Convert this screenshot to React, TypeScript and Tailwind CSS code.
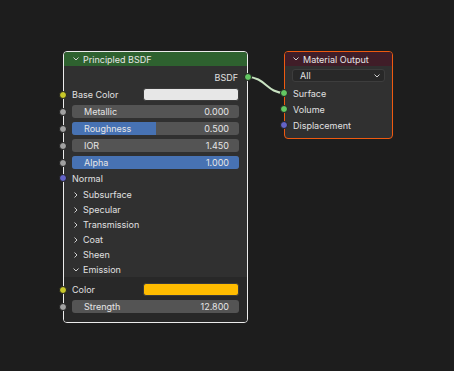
import React from "react";

const font = { fontFamily: "Inter, 'Noto Sans', sans-serif" };

function Socket({ color }: { color: string }) {
  return (
    <span
      className="absolute left-[-5px] top-1/2 z-10 h-[8px] w-[8px] -translate-y-1/2 rounded-full border border-[#202020]"
      style={{ backgroundColor: color }}
    />
  );
}

function Chevron({ open }: { open?: boolean }) {
  return (
    <svg width="8" height="8" viewBox="0 0 8 8" className="shrink-0">
      {open ? (
        <path d="M1.5 2.5 L4 5 L6.5 2.5" fill="none" stroke="#d0d0d0" strokeWidth="1" />
      ) : (
        <path d="M2.5 1.5 L5 4 L2.5 6.5" fill="none" stroke="#d0d0d0" strokeWidth="1" />
      )}
    </svg>
  );
}

function Slider({ label, value, fill, socket = "#a1a1a1" }: { label: string; value: string; fill?: number; socket?: string }) {
  return (
    <div className="relative h-[13px] pl-[8px] pr-[8px]">
      <Socket color={socket} />
      <div className="relative flex h-full items-center justify-between overflow-hidden rounded-[3px] bg-[#545454] pl-[12px] pr-[10px] text-[#e6e6e6]">
        {fill !== undefined && (
          <div className="absolute inset-y-0 left-0 bg-[#4772b3]" style={{ width: `${fill}%` }} />
        )}
        <span className="relative">{label}</span>
        <span className="relative">{value}</span>
      </div>
    </div>
  );
}

function ColorRow({ label, color }: { label: string; color: string }) {
  return (
    <div className="relative flex h-[13px] items-center pl-[8px] pr-[8px]">
      <Socket color="#c7c729" />
      <span className="w-[71px] text-[#e0e0e0]">{label}</span>
      <div className="h-full flex-1 rounded-[3px] border border-[#3a3a3a]" style={{ backgroundColor: color }} />
    </div>
  );
}

function PanelHeader({ label, open }: { label: string; open?: boolean }) {
  return (
    <div className="flex h-[15px] items-center gap-[3px] pl-[8px] text-[#e0e0e0]">
      <Chevron open={open} />
      <span>{label}</span>
    </div>
  );
}

function PrincipledNode() {
  return (
    <div className="absolute left-[63px] top-[51px] flex h-[272px] w-[185px] flex-col rounded-[4px] border border-[#ececec] bg-[#303030] text-[9px] leading-none">
      <div className="flex h-[14px] items-center gap-[3px] rounded-t-[3px] bg-[#2e612f] pl-[8px] text-[#e6e6e6]">
        <Chevron open />
        <span>Principled BSDF</span>
      </div>
      <div className="relative flex h-[22px] items-center justify-end pr-[9px] text-[#e0e0e0]">
        <span>BSDF</span>
        <span className="absolute right-[-5px] top-1/2 z-10 h-[8px] w-[8px] -translate-y-1/2 rounded-full border border-[#202020] bg-[#63c763]" />
      </div>
      <div className="flex flex-col gap-[4px]">
        <ColorRow label="Base Color" color="#e7e7e7" />
        <Slider label="Metallic" value="0.000" />
        <Slider label="Roughness" value="0.500" fill={50} />
        <Slider label="IOR" value="1.450" />
        <Slider label="Alpha" value="1.000" fill={100} />
      </div>
      <div className="relative flex h-[18px] items-center pl-[8px] text-[#e0e0e0]">
        <Socket color="#6363c7" />
        <span>Normal</span>
      </div>
      <PanelHeader label="Subsurface" />
      <PanelHeader label="Specular" />
      <PanelHeader label="Transmission" />
      <PanelHeader label="Coat" />
      <PanelHeader label="Sheen" />
      <PanelHeader label="Emission" open />
      <div className="flex flex-1 flex-col gap-[4px] rounded-b-[3px] bg-[#282828] pt-[6px]">
        <ColorRow label="Color" color="#ffbc00" />
        <Slider label="Strength" value="12.800" />
      </div>
    </div>
  );
}

function OutputRow({ label, color }: { label: string; color: string }) {
  return (
    <div className="relative flex h-[16px] items-center pl-[8px] text-[#e0e0e0]">
      <Socket color={color} />
      <span>{label}</span>
    </div>
  );
}

function MaterialOutputNode() {
  return (
    <div className="absolute left-[284px] top-[51px] flex h-[88px] w-[109px] flex-col rounded-[4px] border border-[#ee5a10] bg-[#303030] text-[9px] leading-none">
      <div className="flex h-[14px] items-center gap-[3px] rounded-t-[3px] bg-[#401d28] pl-[7px] text-[#e6e6e6]">
        <Chevron open />
        <span>Material Output</span>
      </div>
      <div className="px-[7px] pt-[3px]">
        <div className="flex h-[13px] items-center justify-between rounded-[3px] border border-[#3d3d3d] bg-[#282828] pl-[7px] pr-[3px] text-[#e6e6e6]">
          <span>All</span>
          <Chevron open />
        </div>
      </div>
      <div className="flex flex-col pt-[3px]">
        <OutputRow label="Surface" color="#63c763" />
        <OutputRow label="Volume" color="#63c763" />
        <OutputRow label="Displacement" color="#6363c7" />
      </div>
    </div>
  );
}

export default function App() {
  return (
    <div className="relative h-[371px] w-[454px] overflow-hidden bg-[#1d1d1d]" style={font}>
      <svg className="absolute left-0 top-0" width="454" height="371">
        <path d="M247 77 C 266 77, 266 93, 285 93" fill="none" stroke="#c9e3c2" strokeWidth="2" />
      </svg>
      <PrincipledNode />
      <MaterialOutputNode />
    </div>
  );
}
